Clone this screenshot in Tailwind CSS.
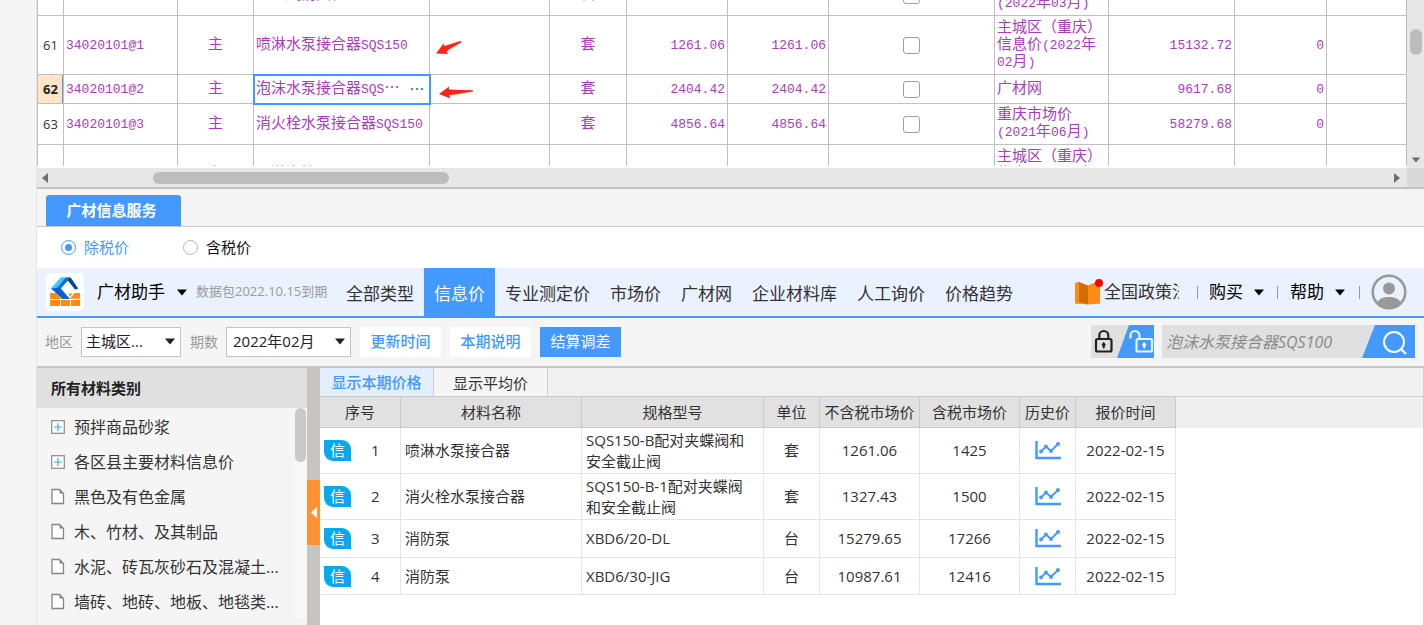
<!DOCTYPE html>
<html lang="zh-CN">
<head>
<meta charset="utf-8">
<meta name="viewport" content="width=device-width, initial-scale=1">
<title>广材信息服务</title>
<script src="https://cdn.jsdelivr.net/npm/@tailwindcss/browser@4"></script>
</head>
<body class="h-screen overflow-hidden bg-[#f4f4f4] font-['Open_Sans','Noto_Sans_CJK_SC',sans-serif] text-[15px] text-[#222]">
<svg class="hidden">
  <symbol id="chart" viewBox="0 0 26 19"><path d="M1.500 0v17H26" fill="none" stroke="#4499ff" stroke-width="2.400"/><path d="M6 10.500L11 5.500L16 10L23 3" fill="none" stroke="#4499ff" stroke-width="1.800"/><circle cx="6" cy="10.500" r="1.900" fill="#4499ff"/><circle cx="11" cy="5.500" r="1.900" fill="#4499ff"/><circle cx="16" cy="10" r="1.900" fill="#4499ff"/><circle cx="23" cy="3" r="2" fill="#4499ff"/></symbol>
  <symbol id="page" viewBox="0 0 14 17"><path d="M1 1.500h7.500L12.500 5.500V15.500H1z" fill="#fff" stroke="#858585" stroke-width="1.300"/><path d="M8.500 1.500v4h4z" fill="#858585"/></symbol>
  <symbol id="plus" viewBox="0 0 14 14"><rect x=".7" y=".7" width="12.600" height="12.600" fill="#fff" stroke="#8a8a8a" stroke-width="1.200"/><path d="M7 3v8M3 7h8" stroke="#33b0e0" stroke-width="1.200"/></symbol>
  <symbol id="down" viewBox="0 0 10 7"><path d="M0 .5h10L5 6.500z" fill="currentColor"/></symbol>
</svg>
<div class="ml-9 flex h-full flex-col border-l border-[#e4e4e4]">

  <section class="flex bg-white">
    <div class="min-w-0 flex-1">
      <div class="h-[166px] overflow-hidden">
        <table class="-mt-[25px] w-full table-fixed border-separate border-spacing-0 font-['Liberation_Mono','Noto_Sans_CJK_SC',monospace] text-[13px] leading-[17px] text-[#a93dba] [&_td]:border-r [&_td]:border-b [&_td]:border-[#c0c0c0] [&_td]:px-[2px] [&_td]:py-0 [&_b]:text-[15px] [&_b]:font-normal [&_th]:border-r [&_th]:border-b [&_th]:border-[#c0c0c0]">
          <colgroup><col class="w-[27px]"><col class="w-[114px]"><col class="w-[76px]"><col class="w-[176px]"><col class="w-[120px]"><col class="w-[77px]"><col class="w-[101px]"><col class="w-[101px]"><col class="w-[166px]"><col class="w-[114px]"><col class="w-[126px]"><col class="w-[92px]"><col></colgroup>
          <tbody>
          <tr class="h-[41px]">
            <th scope="row" class="border-l font-['Open_Sans',sans-serif] font-normal text-[#333]">60</th><td></td><td class="text-center"><b>主</b></td><td><b>地上式消火栓</b></td><td></td><td class="text-center"><b>套</b></td><td></td><td></td><td class="text-center"><input type="checkbox" aria-label="选择 60" class="mx-auto block size-[17px] appearance-none rounded-[3px] border border-[#a0a0a0] bg-white"></td><td><b>重庆市场价</b><br>(2022<b>年</b>03<b>月</b>)</td><td></td><td></td><td></td>
          </tr>
          <tr class="h-[59px]">
            <th scope="row" class="border-l font-['Open_Sans',sans-serif] font-normal text-[#333]">61</th><td>34020101@1</td><td class="text-center"><b>主</b></td><td><b>喷淋水泵接合器</b>SQS150</td><td><svg class="mt-1 ml-1 block h-[15px] w-[28px]" viewBox="0 0 28 15" fill="#ff2413"><path d="M0 13.500L7.500 3.500L8.500 6L24.500 1L26 2L13 9.500L10.500 11.500L12 14Z"/></svg></td><td class="text-center"><b>套</b></td><td class="text-right">1261.06</td><td class="text-right">1261.06</td><td class="text-center"><input type="checkbox" aria-label="选择 61" class="mx-auto block size-[17px] appearance-none rounded-[3px] border border-[#a0a0a0] bg-white"></td><td><b>主城区（重庆）</b><br><b>信息价</b>(2022<b>年</b><br>02<b>月</b>)</td><td class="text-right">15132.72</td><td class="text-right">0</td><td></td>
          </tr>
          <tr class="h-[29px]">
            <th scope="row" class="border-l bg-[#ffe5c6] font-['Open_Sans',sans-serif] font-bold text-[#222] shadow-[inset_-1px_0_0_#4499ff]">62</th><td>34020101@2</td><td class="text-center"><b>主</b></td><td class="outline-2 -outline-offset-1 outline-[#4499ff]"><div class="flex items-center justify-between"><span><b>泡沫水泵接合器</b>SQS<b>⋯</b></span><button type="button" aria-label="更多" class="flex gap-[3px] pr-1"><i class="size-[2px] bg-[#3d8fdc]"></i><i class="size-[2px] bg-[#3d8fdc]"></i><i class="size-[2px] bg-[#3d8fdc]"></i></button></div></td><td><svg class="mt-2 ml-[7px] block h-[14px] w-[36px]" viewBox="0 0 36 14" fill="#ff2413"><path d="M0 8L10 .5V3.500L22 4L34 4.200V5.400L16 8.500L10 9L11.500 12.500Z"/></svg></td><td class="text-center"><b>套</b></td><td class="text-right">2404.42</td><td class="text-right">2404.42</td><td class="text-center"><input type="checkbox" aria-label="选择 62" class="mx-auto block size-[17px] appearance-none rounded-[3px] border border-[#a0a0a0] bg-white"></td><td><b>广材网</b></td><td class="text-right">9617.68</td><td class="text-right">0</td><td></td>
          </tr>
          <tr class="h-[41px]">
            <th scope="row" class="border-l font-['Open_Sans',sans-serif] font-normal text-[#333]">63</th><td>34020101@3</td><td class="text-center"><b>主</b></td><td><b>消火栓水泵接合器</b>SQS150</td><td></td><td class="text-center"><b>套</b></td><td class="text-right">4856.64</td><td class="text-right">4856.64</td><td class="text-center"><input type="checkbox" aria-label="选择 63" class="mx-auto block size-[17px] appearance-none rounded-[3px] border border-[#a0a0a0] bg-white"></td><td><b>重庆市场价</b><br>(2021<b>年</b>06<b>月</b>)</td><td class="text-right">58279.68</td><td class="text-right">0</td><td></td>
          </tr>
          <tr class="h-[59px]">
            <th scope="row" class="border-l"></th><td></td><td class="text-center"><b>主</b></td><td><b>一淋水接</b></td><td></td><td></td><td></td><td></td><td class="text-center"><input type="checkbox" aria-label="选择 64" class="mx-auto block size-[17px] appearance-none rounded-[3px] border border-[#a0a0a0] bg-white"></td><td><b>主城区（重庆）</b><br><b>信息价</b>(2022<b>年</b><br>02<b>月</b>)</td><td></td><td></td><td></td>
          </tr>
          </tbody>
        </table>
      </div>
      <div class="mt-[2px] flex h-[19px] items-center bg-[#e7e7e7] pr-[7px] pl-[5px]">
        <svg class="h-[10px] w-[6px]" viewBox="0 0 6 10"><path d="M6 0v10L0 5z" fill="#6d6d75"/></svg>
        <div class="ml-[105px] h-3 w-[296px] rounded-full bg-[#bdbdbd]"></div>
        <svg class="ml-auto h-[10px] w-[6px]" viewBox="0 0 6 10"><path d="M0 0v10L6 5z" fill="#6d6d75"/></svg>
      </div>
    </div>
    <div class="flex w-[17px] flex-col items-center bg-[#e7e7e7]">
      <div class="mt-[29px] h-[26px] w-3 rounded-full bg-[#bdbdbd]"></div>
      <svg class="mt-auto h-[6px] w-[10px] text-[#6d6d75]"><use href="#down"/></svg>
      <div class="mt-[5px] h-[19px] w-full bg-[#d9d9d9]"></div>
    </div>
  </section>

  <div class="flex h-10 items-end border-t-2 border-b border-t-[#c3c3c3] border-b-[#c9c9c9] bg-[#f4f4f4] pl-[9px]">
    <button type="button" class="h-[31px] w-[135px] rounded-t-[3px] bg-[#4499ff] pr-1 text-[15px] font-bold text-white">广材信息服务</button>
  </div>

  <div class="flex h-[41px] items-center bg-white pl-6">
    <label class="flex items-center gap-2 text-[#4499ff]"><input type="radio" name="tax" checked class="size-[15px] appearance-none rounded-full border border-[#b5b5b5] bg-white checked:border-[#4499ff] checked:bg-[#4499ff] checked:bg-clip-content checked:p-[3px]">除税价</label>
    <label class="ml-[54px] flex items-center gap-2 text-[#111]"><input type="radio" name="tax" class="size-[15px] appearance-none rounded-full border border-[#b5b5b5] bg-white">含税价</label>
  </div>

  <header class="flex h-[50px] items-center border-b-2 border-[#4499ff] bg-[#eaf1ff] pl-[9px] text-[17px] whitespace-nowrap">
    <svg class="size-[38px]" viewBox="0 0 38 38"><rect width="38" height="38" rx="5" fill="#fff"/><g fill="#ff8a16"><path d="M4 20h6l6 6H4zM21 20h13v5.800H24zM4 27h10v6H4zM15 27h9v6h-9zM25 27h9v6h-9z"/></g><path d="M17 25l5-5M22 20l1.500 5.500M22 20h6l-4.500 5" fill="none" stroke="#fff" stroke-width="1.200"/><path d="M15 4.500h9L14 16 5 15.500z" fill="#1fb6fb"/><path d="M15 4.500h4L8.500 16 5 15.500z" fill="#47c8ff"/><path d="M5 15.500L14 14.500 24 26h-7.500z" fill="#0a5fd8"/><path d="M20 4.500h4.500L32 15.500l-3 1L22 7.500l-7.500 8-2.500-1z" fill="#1769cf"/><path d="M24.500 4.500L32 15.500l-2.500 1L21.500 7z" fill="#123f97"/></svg>
    <button type="button" class="ml-[13px] flex items-center gap-[12px] text-black">广材助手<svg class="h-[7px] w-[10px]"><use href="#down"/></svg></button>
    <span class="ml-[9px] w-[140px] text-[13px] text-[#9b9b9b]">数据包2022.10.15到期</span>
    <nav class="flex h-full text-[#333] [&>a]:pt-[3px]">
      <a href="#" class="flex items-center px-[10px]">全部类型</a>
      <a href="#" class="flex items-center bg-[#4499ff] px-[10px] text-white">信息价</a>
      <a href="#" class="flex items-center px-[10px]">专业测定价</a>
      <a href="#" class="flex items-center px-[10px]">市场价</a>
      <a href="#" class="flex items-center px-[10px]">广材网</a>
      <a href="#" class="flex items-center px-[10px]">企业材料库</a>
      <a href="#" class="flex items-center px-[10px]">人工询价</a>
      <a href="#" class="flex items-center px-[10px]">价格趋势</a>
    </nav>
    <div class="ml-auto flex items-center pr-[17px] text-black">
      <svg class="h-[26px] w-[29px]" viewBox="0 0 29 26"><path d="M0 4L4 2.500V24.500H0z" fill="#ff8a16"/><path d="M4 3L13 6.500V25.500L4 23.500z" fill="#d36d00"/><path d="M0 24.500l4-1.200 9 2.300z" fill="#ff8a16"/><path d="M13 6.500L21 3 25 4V24.500L13 25.500z" fill="#ff8a16"/><circle cx="24" cy="4" r="4" fill="#f00"/></svg>
      <a href="#" class="w-[75px] overflow-hidden text-[#333]">全国政策法规</a>
      <i class="ml-[18px] h-[13px] w-px bg-[#999]"></i>
      <button type="button" class="ml-[11px] flex items-center gap-[11px]">购买<svg class="h-[7px] w-[10px]"><use href="#down"/></svg></button>
      <i class="ml-[13px] h-[13px] w-px bg-[#999]"></i>
      <button type="button" class="ml-[12px] flex items-center gap-[11px]">帮助<svg class="h-[7px] w-[10px]"><use href="#down"/></svg></button>
      <i class="ml-[14px] h-[13px] w-px bg-[#999]"></i>
      <button type="button" aria-label="用户" class="ml-[11px]"><svg class="size-[36px]" viewBox="0 0 36 36"><circle cx="18" cy="18" r="16.300" fill="none" stroke="#999" stroke-width="2.600"/><circle cx="18" cy="14.500" r="6" fill="#999"/><path d="M6 29c2-4.500 6.500-6 12-6s10 1.500 12 6c-3 4-7 6-12 6s-9-2-12-6z" fill="#999"/></svg></button>
    </div>
  </header>

  <div class="flex h-[50px] items-center border-b-2 border-[#c6c6c6] bg-[#f5f5f5] pr-[9px] pb-px pl-2 whitespace-nowrap">
    <label for="area" class="text-[14px] text-[#999]">地区</label>
    <div class="relative ml-2"><select id="area" class="block h-[30px] w-[100px] appearance-none border border-[#c4c4c4] bg-white pl-1 text-[15px]"><option>主城区...</option></select><svg class="pointer-events-none absolute top-[11px] right-[6px] h-[7px] w-[10px]"><use href="#down"/></svg></div>
    <label for="period" class="ml-[9px] text-[14px] text-[#999]">期数</label>
    <div class="relative ml-2"><select id="period" class="block h-[30px] w-[125px] appearance-none border border-[#c4c4c4] bg-white pl-[6px] text-[15px]"><option>2022年02月</option></select><svg class="pointer-events-none absolute top-[11px] right-[6px] h-[7px] w-[10px]"><use href="#down"/></svg></div>
    <div class="ml-[9px] flex gap-[9px] text-[15px] font-medium text-[#4499ff]">
      <button type="button" class="h-[30px] w-[81px] bg-white">更新时间</button>
      <button type="button" class="h-[30px] w-[81px] bg-white">本期说明</button>
      <button type="button" class="h-[30px] w-[81px] bg-[#4499ff] font-normal text-white">结算调差</button>
    </div>
    <button type="button" aria-label="锁定" class="ml-auto"><svg class="block h-[33px] w-[63px]" viewBox="0 0 63 33"><path d="M0 0h63v33H0z" fill="#e0e0e0"/><path d="M38 0h25v33H26z" fill="#4499ff"/><g fill="none" stroke-width="2.200"><rect x="5" y="14" width="15.500" height="12.500" rx="1.500" stroke="#222"/><path d="M8.300 14v-3.500a4.500 4.500 0 0 1 9 0V14" stroke="#222"/><rect x="45.500" y="14" width="15.500" height="12.500" rx="1.500" stroke="#e6f2ff"/><path d="M48.500 14v-3.500a4.500 4.500 0 0 0-9 0v3" stroke="#e6f2ff"/></g><path d="M12.700 17l2 2.200-1.500 4.300h-1l-1.500-4.300z" fill="#222"/><path d="M53.200 17l2 2.200-1.500 4.300h-1l-1.500-4.300z" fill="#fff"/></svg></button>
    <form class="ml-2 flex h-[33px] bg-[#e0e0e0]"><input type="text" aria-label="搜索材料" placeholder="泡沫水泵接合器SQS100" class="w-[200px] pl-1 text-[16px] italic placeholder:text-[#8a8a8a]"><button type="button" aria-label="搜索"><svg class="block h-[33px] w-[53px]" viewBox="0 0 53 33"><path d="M13 0h40v33H0z" fill="#4499ff"/><circle cx="32" cy="17" r="10" fill="none" stroke="#fff" stroke-width="2"/><path d="M39 24l5 5" stroke="#fff" stroke-width="2.400"/></svg></button></form>
  </div>

  <main class="flex min-h-0 flex-1">
    <aside class="w-[270px] shrink-0 overflow-hidden bg-[#f5f5f5]">
      <h2 class="flex h-10 items-center bg-[#e0e0e0] pl-[14px] text-[15px] font-bold">所有材料类别</h2>
      <div class="flex">
        <ul class="min-w-0 flex-1 pt-[1px] pl-[14px] text-[16px] whitespace-nowrap text-[#333] [&>li]:flex [&>li]:h-[35px] [&>li]:items-center [&>li]:gap-[9px]">
          <li><svg class="size-[14px]"><use href="#plus"/></svg>预拌商品砂浆</li>
          <li><svg class="size-[14px]"><use href="#plus"/></svg>各区县主要材料信息价</li>
          <li><svg class="h-[17px] w-[14px]"><use href="#page"/></svg>黑色及有色金属</li>
          <li><svg class="h-[17px] w-[14px]"><use href="#page"/></svg>木、竹材、及其制品</li>
          <li><svg class="h-[17px] w-[14px]"><use href="#page"/></svg>水泥、砖瓦灰砂石及混凝土...</li>
          <li><svg class="h-[17px] w-[14px]"><use href="#page"/></svg>墙砖、地砖、地板、地毯类...</li>
        </ul>
        <div class="w-3 bg-[#f8f8f8]"><div class="h-[54px] w-[11px] rounded-full bg-[#c9c9c9]"></div></div>
      </div>
    </aside>
    <div class="w-[13px] shrink-0 bg-[#c7c5c3] pt-[112px]">
      <button type="button" aria-label="收起" class="flex h-[65px] w-full items-center justify-center bg-[#ff9233]"><svg class="h-[11px] w-[6px]" viewBox="0 0 6 11"><path d="M6 0v11L0 5.500z" fill="#fff"/></svg></button>
    </div>
    <section class="min-w-0 flex-1 border-r border-[#d0d0d0] bg-white">
      <div class="flex h-[28px] bg-[#f1f1f1]">
        <button type="button" class="w-[114px] border-r border-[#cfcfcf] bg-[#e3eeff] font-medium text-[#4499ff]">显示本期价格</button>
        <button type="button" class="w-[114px] border-r border-[#cfcfcf] bg-[#f5f5f5] pt-[2px] text-[#333]">显示平均价</button>
      </div>
      <div class="bg-[linear-gradient(#d0d0d0_1px,#efefef_1px,#efefef_32px,#fff_32px)]">
      <table class="w-[856px] table-fixed border-separate border-spacing-0 text-center text-[15px] leading-[21px] text-[#333] [&_td]:border-r [&_td]:border-b [&_td]:border-[#e4e4e4] [&_td]:p-0 [&_th]:border-t [&_th]:border-r [&_th]:border-b [&_th]:border-[#c9c9c9] [&_th]:bg-[#e1e1e1] [&_th]:p-0 [&_th]:font-normal">
        <colgroup><col class="w-[81px]"><col class="w-[181px]"><col class="w-[182px]"><col class="w-[56px]"><col class="w-[100px]"><col class="w-[100px]"><col class="w-[56px]"><col class="w-[100px]"></colgroup>
        <thead><tr class="h-8"><th scope="col">序号</th><th scope="col">材料名称</th><th scope="col">规格型号</th><th scope="col">单位</th><th scope="col">不含税市场价</th><th scope="col">含税市场价</th><th scope="col">历史价</th><th scope="col">报价时间</th></tr></thead>
        <tbody>
          <tr class="h-[46px]"><td><div class="flex items-center pl-1"><span class="flex h-[21px] w-[27px] items-center justify-center rounded-tr-[9px] rounded-bl-[9px] bg-[#06a8f0] text-white">信</span><span class="ml-5">1</span></div></td><td class="text-left"><span class="pl-1">喷淋水泵接合器</span></td><td class="text-left"><div class="pl-1">SQS150-B配对夹蝶阀和<br>安全截止阀</div></td><td>套</td><td>1261.06</td><td>1425</td><td><svg class="mx-auto h-[19px] w-[26px]"><use href="#chart"/></svg></td><td>2022-02-15</td></tr>
          <tr class="h-[46px]"><td><div class="flex items-center pl-1"><span class="flex h-[21px] w-[27px] items-center justify-center rounded-tr-[9px] rounded-bl-[9px] bg-[#06a8f0] text-white">信</span><span class="ml-5">2</span></div></td><td class="text-left"><span class="pl-1">消火栓水泵接合器</span></td><td class="text-left"><div class="pl-1">SQS150-B-1配对夹蝶阀<br>和安全截止阀</div></td><td>套</td><td>1327.43</td><td>1500</td><td><svg class="mx-auto h-[19px] w-[26px]"><use href="#chart"/></svg></td><td>2022-02-15</td></tr>
          <tr class="h-[38px]"><td><div class="flex items-center pl-1"><span class="flex h-[21px] w-[27px] items-center justify-center rounded-tr-[9px] rounded-bl-[9px] bg-[#06a8f0] text-white">信</span><span class="ml-5">3</span></div></td><td class="text-left"><span class="pl-1">消防泵</span></td><td class="text-left"><div class="pl-1">XBD6/20-DL</div></td><td>台</td><td>15279.65</td><td>17266</td><td><svg class="mx-auto h-[19px] w-[26px]"><use href="#chart"/></svg></td><td>2022-02-15</td></tr>
          <tr class="h-[37px]"><td><div class="flex items-center pl-1"><span class="flex h-[21px] w-[27px] items-center justify-center rounded-tr-[9px] rounded-bl-[9px] bg-[#06a8f0] text-white">信</span><span class="ml-5">4</span></div></td><td class="text-left"><span class="pl-1">消防泵</span></td><td class="text-left"><div class="pl-1">XBD6/30-JIG</div></td><td>台</td><td>10987.61</td><td>12416</td><td><svg class="mx-auto h-[19px] w-[26px]"><use href="#chart"/></svg></td><td>2022-02-15</td></tr>
        </tbody>
      </table>
      </div>
    </section>
  </main>
</div>
</body>
</html>
